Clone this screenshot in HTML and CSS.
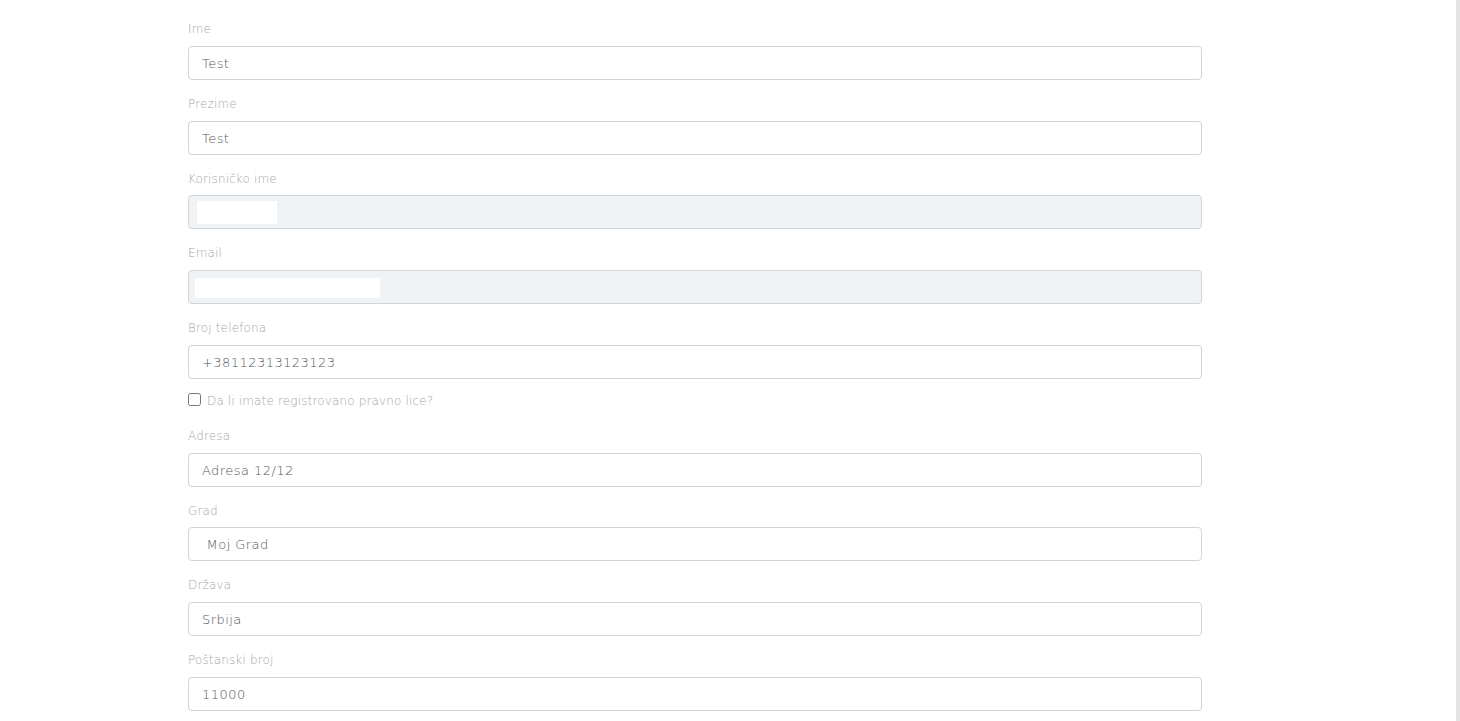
FILE: index.html
```html
<!DOCTYPE html>
<html lang="sr">

<head>
    <title>Profil</title>
    <meta charset="utf-8">
    <meta name="viewport" content="width=device-width, initial-scale=1">
    <link rel="stylesheet" href="styles.css">
</head>

<body>

    <main>

        <form action="#" method="post" class="profile-form">

            <section class="field">
                <label for="first-name">Ime</label>
                <input id="first-name" name="first-name" value="Test">
            </section>

            <section class="field">
                <label for="last-name">Prezime</label>
                <input id="last-name" name="last-name" value="Test">
            </section>

            <section class="field">
                <label for="username">Korisničko ime</label>
                <div class="locked">
                    <input id="username" name="username" disabled>
                    <span class="redact redact-user"></span>
                </div>
            </section>

            <section class="field">
                <label for="email">Email</label>
                <div class="locked">
                    <input id="email" name="email" disabled>
                    <span class="redact redact-email"></span>
                </div>
            </section>

            <section class="field">
                <label for="phone">Broj telefona</label>
                <input id="phone" name="phone" value="+38112313123123">
            </section>

            <section class="check">
                <input type="checkbox" id="company" name="company">
                <label for="company">Da li imate registrovano pravno lice?</label>
            </section>

            <section class="field">
                <label for="address">Adresa</label>
                <input id="address" name="address" value="Adresa 12/12">
            </section>

            <section class="field">
                <label for="city">Grad</label>
                <input id="city" name="city" value=" Moj Grad">
            </section>

            <section class="field">
                <label for="country">Država</label>
                <input id="country" name="country" value="Srbija">
            </section>

            <section class="field">
                <label for="zip">Poštanski broj</label>
                <input id="zip" name="zip" value="11000">
            </section>

        </form>

    </main>

    <div class="scrollbar"></div>

</body>

</html>
```

FILE: styles.css
```css
body {
    background: #fff;
    font-family: "DejaVu Sans", "Open Sans", sans-serif;
    margin: 0;
}

main {
    padding: 18px 0 0 188px;
    width: 1014px;
}

.profile-form {
    display: flex;
    flex-direction: column;
    gap: 13px;
}

.field label {
    color: #a6a6a6;
    display: block;
    font-size: 12px;
    font-weight: 200;
    letter-spacing: 0.15px;
    line-height: 19.75px;
    margin: 0 0 6px 0;
    padding: 2px 0 0 0;
}

.field input {
    background: #fff;
    border: 1px solid #ced4da;
    border-radius: 4px;
    box-sizing: border-box;
    color: #54585c;
    display: block;
    font-family: inherit;
    font-size: 13px;
    font-weight: 200;
    height: 34px;
    letter-spacing: 0.45px;
    padding: 1px 13px 0 13px;
    width: 100%;
}

.field input:disabled {
    background: #eff3f6;
}

.locked {
    position: relative;
}

/* hidden personal data */
.redact {
    background: #fff;
    position: absolute;
}

.redact-user {
    height: 23px;
    left: 9px;
    top: 6px;
    width: 80px;
}

.redact-email {
    height: 20px;
    left: 7px;
    top: 8px;
    width: 185px;
}

.check {
    align-items: flex-start;
    display: flex;
    height: 20px;
}

.check input {
    height: 13px;
    margin: 1px 6px 0 0;
    width: 13px;
}

.check label {
    color: #a6a6a6;
    font-size: 12px;
    font-weight: 200;
    letter-spacing: 0.15px;
    line-height: 19px;
}

.scrollbar {
    background: #e3e3e3;
    bottom: 0;
    position: fixed;
    right: 0;
    top: 0;
    width: 4px;
}
```
